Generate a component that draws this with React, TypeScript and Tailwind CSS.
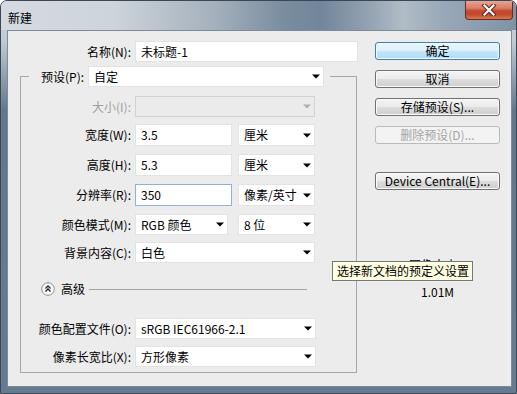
import React from "react";
import clsx from "clsx";

const font = "font-['Noto_Sans_CJK_SC','Noto_Sans',sans-serif]";

function Arrow({ disabled }: { disabled?: boolean }) {
  return (
    <svg width="8" height="5" viewBox="0 0 8 5" className="shrink-0">
      <path d="M0 0.5h8L4 4.5z" fill={disabled ? "#b0b0b0" : "#000"} />
    </svg>
  );
}

function Select({ value, className, disabled }: { value?: string; className?: string; disabled?: boolean }) {
  return (
    <div
      className={clsx(
        "flex items-center justify-between pl-[5px] pr-[3px] h-full border",
        disabled ? "bg-[#ebebeb] border-[#d2d2d2]" : "bg-white border-[#e3e3e3]",
        className
      )}
    >
      <span className="whitespace-nowrap">{value}</span>
      <Arrow disabled={disabled} />
    </div>
  );
}

function Input({ value, className, focused }: { value: string; className?: string; focused?: boolean }) {
  return (
    <div
      className={clsx(
        "flex items-center pl-[5px] h-full border bg-white",
        focused ? "border-[#8fb2d3]" : "border-[#e3e3e3]",
        className
      )}
    >
      <span className="whitespace-nowrap">{value}</span>
    </div>
  );
}

function Row({ label, className, disabled, children }: { label: string; className: string; disabled?: boolean; children: React.ReactNode }) {
  return (
    <div className={clsx("flex items-center", className)}>
      <span className={clsx("w-[110px] text-right whitespace-nowrap", disabled && "text-[#a0a0a0]")}>{label}</span>
      <div className="ml-[4px] flex h-full">{children}</div>
    </div>
  );
}

function Btn({ children, kind, className }: { children: React.ReactNode; kind?: "default" | "disabled"; className?: string }) {
  return (
    <div
      className={clsx(
        "h-[18px] w-[125px] rounded-[3px] border flex items-center justify-center leading-none",
        kind === "default" &&
          "border-[#3c7fb1] bg-[linear-gradient(180deg,#eaf6fd_0%,#dcf1fc_50%,#c4e6fa_50%,#b2dcf5_100%)] shadow-[inset_0_0_0_1px_#f4fbff]",
        kind === "disabled" && "border-[#b6babd] bg-[#f3f3f3] text-[#a3a3a3]",
        !kind &&
          "border-[#707070] bg-[linear-gradient(180deg,#f4f4f4_0%,#ebebeb_50%,#dddddd_50%,#cfcfcf_100%)] shadow-[inset_0_0_0_1px_#fafafa]",
        className
      )}
    >
      {children}
    </div>
  );
}

function CloseButton() {
  return (
    <div className="mr-[3px] w-[48px] h-[19px] rounded-b-[4px] border border-t-0 border-[#6b2b1e] bg-[linear-gradient(180deg,#e7a595_0%,#d97d67_40%,#c5482f_55%,#c24a2e_75%,#d9794f_100%)] flex items-center justify-center">
      <svg width="16" height="12" viewBox="0 0 16 12">
        <path d="M3.5 1.5L12.5 10.5M12.5 1.5L3.5 10.5" stroke="#5a2418" strokeWidth="4.2" strokeLinecap="square" />
        <path d="M3.5 1.5L12.5 10.5M12.5 1.5L3.5 10.5" stroke="#ffffff" strokeWidth="2.2" strokeLinecap="square" />
      </svg>
    </div>
  );
}

function AdvancedIcon() {
  return (
    <svg width="14" height="14" viewBox="0 0 14 14" className="shrink-0">
      <circle cx="7" cy="7" r="6.3" fill="#fafafa" stroke="#8c8c8c" strokeWidth="1" />
      <path d="M4.5 6.5L7 4L9.5 6.5M4.5 9.5L7 7L9.5 9.5" fill="none" stroke="#222" strokeWidth="1.3" />
    </svg>
  );
}

export default function App() {
  return (
    <div className={`w-[517px] h-[394px] ${font} text-[12px] text-black`}>
      <div className="flex flex-col w-full h-full rounded-t-[7px] border border-[#3a4756] overflow-hidden bg-[linear-gradient(180deg,#ccd3da_0px,#c2cad2_40px,#62768c_110px,#667a90_100%)]">
        {/* title bar */}
        <div className="h-[29px] shrink-0 flex items-start justify-between bg-[linear-gradient(90deg,#d4dae0_0%,#cdd4da_22%,#a3afbb_42%,#7a8c9f_55%,#72859a_62%,#96a4b3_72%,#b1bcc6_78%,#99a8b8_86%,#7f92a6_100%)]">
          <span className="ml-[7px] mt-[8px] leading-[17px]">新建</span>
          <CloseButton />
        </div>

        {/* client */}
        <div className="relative flex-1 ml-[6px] mr-[4px] mb-[6px] border border-[#7d8a97] bg-[#ececec] flex">
          {/* left column */}
          <div className="w-[350px] flex flex-col">
            <div className="mt-[10px] h-[21px] flex items-center">
              <span className="w-[123px] text-right whitespace-nowrap">名称(N):</span>
              <Input value="未标题-1" className="ml-[4px] w-[223px]" />
            </div>

            <fieldset className="mt-[4px] ml-[12px] w-[337px] border border-[#a7a7a7] pb-[5px]">
              <legend className="ml-[8px] pl-[12px] pr-[6px] h-[21px] flex items-center">
                <span className="whitespace-nowrap">预设(P):</span>
                <Select value="自定" className="ml-[4px] w-[236px]" />
              </legend>

              <Row label="大小(I):" disabled className="mt-[9px] h-[21px]">
                <Select disabled className="w-[180px]" />
              </Row>
              <Row label="宽度(W):" className="mt-[7px] h-[22px]">
                <Input value="3.5" className="w-[97px]" />
                <Select value="厘米" className="ml-[6px] w-[77px]" />
              </Row>
              <Row label="高度(H):" className="mt-[8px] h-[22px]">
                <Input value="5.3" className="w-[97px]" />
                <Select value="厘米" className="ml-[6px] w-[77px]" />
              </Row>
              <Row label="分辨率(R):" className="mt-[8px] h-[22px]">
                <Input value="350" focused className="w-[97px]" />
                <Select value="像素/英寸" className="ml-[6px] w-[77px]" />
              </Row>
              <Row label="颜色模式(M):" className="mt-[8px] h-[21px]">
                <Select value="RGB 颜色" className="w-[93px]" />
                <Select value="8 位" className="ml-[10px] w-[77px]" />
              </Row>
              <Row label="背景内容(C):" className="mt-[7px] h-[21px]">
                <Select value="白色" className="w-[180px]" />
              </Row>

              <div className="mt-[19px] h-[14px] flex items-center ml-[20px] mr-[49px]">
                <AdvancedIcon />
                <span className="ml-[6px] whitespace-nowrap">高级</span>
                <div className="ml-[4px] flex-1 h-px bg-[#a3a3a3]" />
              </div>

              <Row label="颜色配置文件(O):" className="mt-[22px] h-[21px]">
                <Select value="sRGB IEC61966-2.1" className="w-[181px]" />
              </Row>
              <Row label="像素长宽比(X):" className="mt-[7px] h-[21px]">
                <Select value="方形像素" className="w-[181px]" />
              </Row>
            </fieldset>
          </div>

          {/* right column */}
          <div className="ml-[17px] w-[125px] flex flex-col">
            <Btn kind="default" className="mt-[11px]">确定</Btn>
            <Btn className="mt-[10px]">取消</Btn>
            <Btn className="mt-[10px]">存储预设(S)...</Btn>
            <Btn kind="disabled" className="mt-[10px]">删除预设(D)...</Btn>
            <Btn className="mt-[28px]">Device Central(E)...</Btn>
            <span className="mt-[66px] pl-[34px] leading-[17px] whitespace-nowrap">图像大小:</span>
            <span className="mt-[10px] pl-[46px] leading-[17px] whitespace-nowrap">1.01M</span>
          </div>

          {/* tooltip */}
          <div className="absolute left-[324px] top-[230px] w-[141px] h-[20px] border border-[#767676] bg-[#ffffe1] pl-[4px] flex items-center whitespace-nowrap">
            选择新文档的预定义设置
          </div>
        </div>
      </div>
    </div>
  );
}
